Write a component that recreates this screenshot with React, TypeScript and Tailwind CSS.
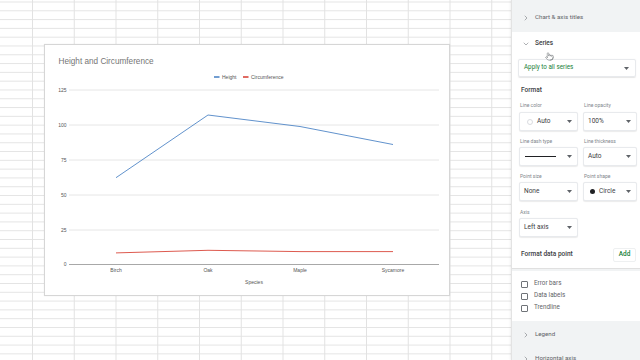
import React from "react";
import { ChevronRight, ChevronDown, Pointer } from "lucide-react";

const Caret = () => (
  <svg width="5" height="3" viewBox="0 0 5 3" className="shrink-0">
    <path d="M0 0 L5 0 L2.5 3 Z" fill="#5f6368" />
  </svg>
);

function Box({ children, w }: { children: React.ReactNode; w: string }) {
  return (
    <div
      className={`${w} h-[19px] flex items-center justify-between pl-[4px] pr-[5px] rounded-[2px] border border-[#e8eaed] bg-white shadow-[0_0.5px_1px_rgba(0,0,0,0.08)]`}
    >
      <div className="flex items-center gap-[4px] text-[6.5px] text-[#3c4043]">{children}</div>
      <Caret />
    </div>
  );
}

function Label({ children }: { children: React.ReactNode }) {
  return <div className="h-[8px] flex items-center text-[5px] text-[#80868b] pl-[1px]">{children}</div>;
}

function Chart() {
  const grid = [
    { y: 45, l: "125" },
    { y: 80, l: "100" },
    { y: 115, l: "75" },
    { y: 150, l: "50" },
    { y: 185, l: "25" },
  ];
  const f = "Liberation Sans, Arial, sans-serif";
  return (
    <svg width="406" height="252" viewBox="0 0 406 252" className="block">
      <text x="13.5" y="19" fontSize="8.2" fill="#757575" fontFamily={f}>
        Height and Circumference
      </text>
      <line x1="169" y1="32" x2="174.5" y2="32" stroke="#4f86c6" strokeWidth="1.6" />
      <text x="177" y="33.8" fontSize="5" fill="#555" fontFamily={f}>Height</text>
      <line x1="198" y1="32" x2="203.5" y2="32" stroke="#d9473b" strokeWidth="1.6" />
      <text x="206" y="33.8" fontSize="5" fill="#555" fontFamily={f}>Circumference</text>
      {grid.map((g) => (
        <g key={g.l}>
          <line x1="24" y1={g.y} x2="394" y2={g.y} stroke="#e3e3e3" strokeWidth="0.9" />
          <text x="21.5" y={g.y + 1.7} fontSize="5" fill="#555" textAnchor="end" fontFamily={f}>
            {g.l}
          </text>
        </g>
      ))}
      <line x1="24" y1="219.5" x2="394" y2="219.5" stroke="#9e9e9e" strokeWidth="0.9" />
      <text x="21.5" y="221.2" fontSize="5" fill="#555" textAnchor="end" fontFamily={f}>0</text>
      {[
        { x: 71, l: "Birch" },
        { x: 163, l: "Oak" },
        { x: 255, l: "Maple" },
        { x: 348, l: "Sycamore" },
      ].map((d) => (
        <text key={d.l} x={d.x} y="226.5" fontSize="5" fill="#555" textAnchor="middle" fontFamily={f}>
          {d.l}
        </text>
      ))}
      <text x="209" y="238.5" fontSize="5" fill="#555" textAnchor="middle" fontFamily={f}>Species</text>
      <polyline points="71,132.7 163,70 255,81.5 348,99.5" fill="none" stroke="#4f86c6" strokeWidth="0.9" />
      <polyline points="71,207.9 163,205.3 255,206.6 348,206.6" fill="none" stroke="#d9473b" strokeWidth="0.9" />
    </svg>
  );
}

export default function App() {
  return (
    <div className="w-[640px] h-[360px] flex overflow-hidden bg-white font-['Roboto',sans-serif]">
      <div className="relative w-[511px] h-full bg-white [background-image:linear-gradient(to_right,#e2e2e2_1px,transparent_1px),linear-gradient(to_bottom,#e4e4e4_1px,transparent_1px)] [background-size:41.75px_8.8px] [background-position:32px_1.5px]">
        <div className="absolute left-[44px] top-[44px] w-[406px] h-[252px] bg-white border border-[#d6d6d6] shadow-[0_0_1px_rgba(0,0,0,0.1)]">
          <Chart />
        </div>
      </div>
      <div className="relative w-[129px] h-full bg-[#f1f3f4] flex flex-col border-l border-[#e3e3e3] shadow-[-1px_0_2px_rgba(0,0,0,0.06)]">
        <div className="h-[32px] shrink-0 flex items-center pt-[4px] pl-[10px] gap-[5px] text-[6.2px] text-[#5f6368]">
          <ChevronRight size={8} strokeWidth={1.5} color="#5f6368" />
          <span>Chart &amp; axis titles</span>
        </div>
        <div className="bg-white h-[237px] shrink-0 flex flex-col pl-[6px] pr-[4px] border-b border-[#e0e0e0]">
          <div className="h-[24px] flex items-center pl-[4px] gap-[5px] text-[6.5px] font-medium text-[#3c4043]">
            <ChevronDown size={8} strokeWidth={1.5} color="#5f6368" />
            <span>Series</span>
          </div>
          <div className="mt-[3px] h-[18px] flex items-center justify-between pl-[5px] pr-[6px] rounded-[2px] border border-[#e8eaed] shadow-[0_0.5px_1px_rgba(0,0,0,0.1)] text-[6.3px] text-[#188038]">
            <span>Apply to all series</span>
            <Caret />
          </div>
          <div className="mt-[9px] h-[10px] flex items-center pl-[3px] text-[6.5px] font-medium text-[#3c4043]">Format</div>
          <div className="mt-[6px] grid grid-cols-[59px_54px] gap-x-[5px] pl-[1px]">
            <Label>Line color</Label>
            <Label>Line opacity</Label>
          </div>
          <div className="mt-[2px] grid grid-cols-[59px_54px] gap-x-[5px] pl-[1px]">
            <Box w="w-[59px]">
              <span className="w-[6px] h-[6px] rounded-full border border-[#dadce0] bg-white ml-[3px]" />
              <span>Auto</span>
            </Box>
            <Box w="w-[54px]">
              <span>100%</span>
            </Box>
          </div>
          <div className="mt-[7px] grid grid-cols-[59px_54px] gap-x-[5px] pl-[1px]">
            <Label>Line dash type</Label>
            <Label>Line thickness</Label>
          </div>
          <div className="mt-[1px] grid grid-cols-[59px_54px] gap-x-[5px] pl-[1px]">
            <Box w="w-[59px]">
              <span className="w-[31px] h-[1px] bg-[#202124] ml-[1px]" />
            </Box>
            <Box w="w-[54px]">
              <span>Auto</span>
            </Box>
          </div>
          <div className="mt-[7px] grid grid-cols-[59px_54px] gap-x-[5px] pl-[1px]">
            <Label>Point size</Label>
            <Label>Point shape</Label>
          </div>
          <div className="mt-[1px] grid grid-cols-[59px_54px] gap-x-[5px] pl-[1px]">
            <Box w="w-[59px]">
              <span>None</span>
            </Box>
            <Box w="w-[54px]">
              <span className="w-[5px] h-[5px] rounded-full bg-[#202124] ml-[2px]" />
              <span>Circle</span>
            </Box>
          </div>
          <div className="mt-[8px] pl-[1px]">
            <Label>Axis</Label>
          </div>
          <div className="mt-[1px] pl-[1px]">
            <Box w="w-[59px]">
              <span>Left axis</span>
            </Box>
          </div>
          <div className="mt-[11px] flex items-center justify-between pl-[3px]">
            <span className="text-[6.5px] font-medium text-[#3c4043]">Format data point</span>
            <span className="h-[14px] w-[23px] flex items-center justify-center rounded-[2px] border border-[#eef0f1] text-[6.5px] font-medium text-[#188038]">
              Add
            </span>
          </div>
        </div>
        <div className="mt-[2px] bg-white h-[50px] shrink-0 flex flex-col justify-center gap-[5px] pl-[9px]">
          {["Error bars", "Data labels", "Trendline"].map((t) => (
            <div key={t} className="h-[7px] flex items-center gap-[6px] text-[6.3px] text-[#5f6368]">
              <span className="w-[7px] h-[7px] rounded-[1px] border border-[#6f7378]" />
              <span>{t}</span>
            </div>
          ))}
        </div>
        <div className="h-[26px] shrink-0 flex items-center pt-[2px] pl-[10px] gap-[5px] text-[6.2px] text-[#5f6368]">
          <ChevronRight size={8} strokeWidth={1.5} color="#5f6368" />
          <span>Legend</span>
        </div>
        <div className="h-[24px] shrink-0 flex items-center pl-[10px] gap-[5px] text-[6.2px] text-[#5f6368]">
          <ChevronRight size={8} strokeWidth={1.5} color="#5f6368" />
          <span>Horizontal axis</span>
        </div>
        <Pointer size={9} strokeWidth={1.3} color="#5f6368" className="absolute left-[33px] top-[52px]" />
      </div>
    </div>
  );
}
